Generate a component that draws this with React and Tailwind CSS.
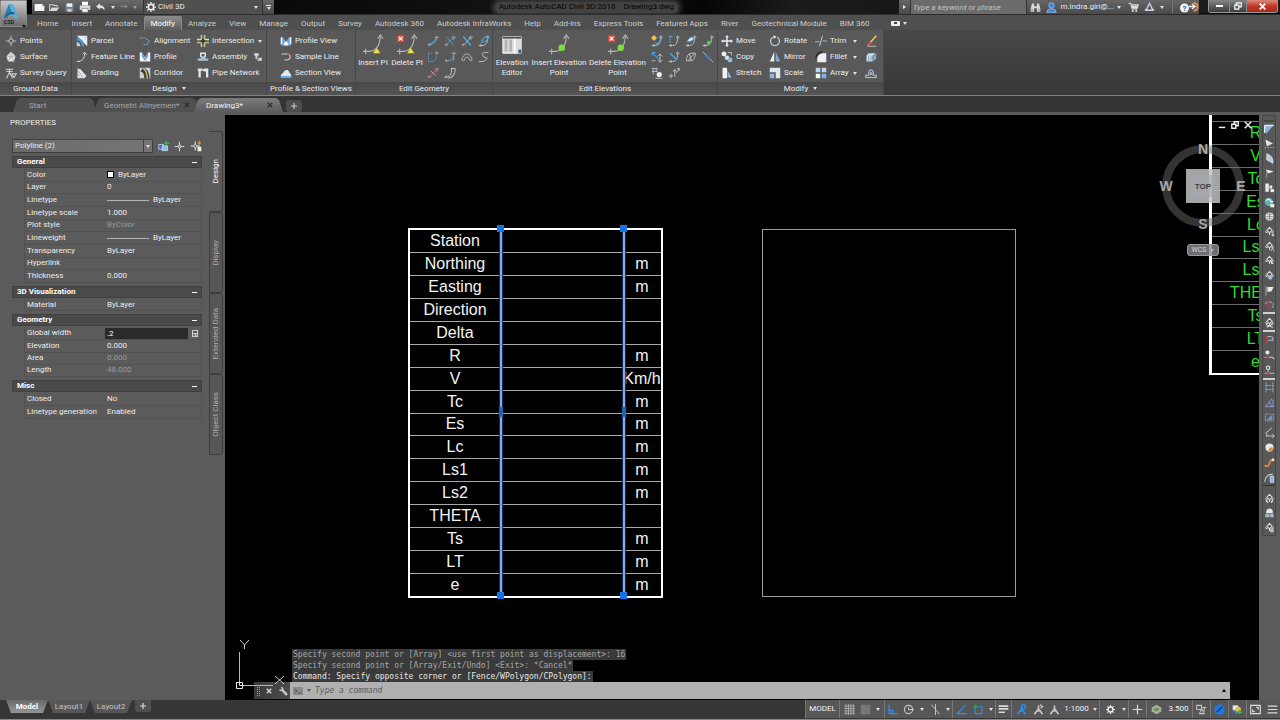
import React from 'react';

const G = '#d6d6d6';
const B = '#8fc1ee';

const ICONS = {
    points: <><circle cx="8" cy="8" r="3" fill="none" stroke={G} /><path d="M8 1v5M8 10v5M1 8h5M10 8h5" stroke={G} /></>,
    surface: <><path d="M8 1l6 6-2 7H4L2 7z" fill="#e8e8e8" /><path d="M8 1v6l6 0M8 7l-4 7M8 7l4 7M2 7h6" stroke="#9a9a9a" fill="none" /></>,
    query: <><path d="M1 3h10M2 6h8M6 3v4l-4 8M6 7l4 8M9 9h6l-3 5z" stroke={G} fill="none" strokeWidth="1.4" /></>,
    parcel: <><path d="M1 1h14v14z" fill="#e6eef6" /><path d="M1 4q9 0 10 11H8Q7 7 1 7z" fill="#4b9be0" /><path d="M1 9q4 1 5 6H1zM11 2l3 0v5z" fill="#cfcfcf" /></>,
    featureLine: <><path d="M2 14q9 0 10-11M1 14h4M9 4l3-2 2 3" stroke={G} fill="none" strokeWidth="1.3" /></>,
    grading: <><path d="M2 2l4 1 8 9-3 3H2z" fill="#e4e4e4" /><path d="M3 5l6 9M2 9l4 5" stroke="#86a6c6" /></>,
    alignment: <><path d="M1 4h7M9 5q5 1 4 5-1 3-7 3" stroke="#7fa4cc" fill="none" strokeWidth="1.5" strokeDasharray="3 1.4" /></>,
    profile: <><path d="M1 2h3l4 7 4-7h3v12H1z" fill="#f1f1f1" /><path d="M4 2l4 9 4-9v5l-4 6-4-6z" fill="#4a8fd8" /></>,
    corridor: <><path d="M1 1h14v14H1z" fill="#cfcfcf" /><path d="M2 6q5 1 5 9h7Q14 3 5 1z" fill="#3f3f3f" /><path d="M5 2q6 3 6 13" stroke="#e8d860" fill="none" strokeWidth="1.6" /></>,
    intersection: <><path d="M5 0h6v16H5zM0 5h16v6H0z" fill="#d8d8b8" /><path d="M6.500 0h3v16h-3zM0 6.500h16v3H0z" fill="#3a3a30" /><path d="M8 0v5M8 11v5M0 8h5M11 8h5" stroke="#e6dc7a" /></>,
    assembly: <><path d="M4 2h8v6H4z" fill="#e6e6e6" /><path d="M1 10h4V7h6v3h4v3H1z" fill="#a9c2dc" /><path d="M6 4h4v3H6z" fill="#555" /></>,
    assemblySmall: <><path d="M2 2h7v4H7v3h7v5H7v-3H4V6H2z" fill="#d3dce6" /><path d="M6 9h3v3H6z" fill="#777" /></>,
    pipe: <><path d="M1 2h6v3H5v9H2V5H1zM9 2h6v12h-3V6H9z" fill="#e6e6e6" /><path d="M6 4h4" stroke={G} strokeWidth="2" /></>,
    sample: <><path d="M2 4h8M11 4q4 2 2 6-1 2-7 2" stroke={G} fill="none" strokeWidth="1.4" /><path d="M9 2l4 3" stroke="#e0503c" strokeWidth="1.6" /></>,
    section: <><path d="M1 12q0-3 3-4 2-5 6-4 2 1 3 4 2 1 2 4v2H1z" fill="#dfeaf4" /><path d="M1 12h14v2H1z" fill="#6aa6e2" /></>,
    profileView: <><path d="M1 3h3l4 6 4-6h3v11H1z" fill="#6aa6e2" /><path d="M1 3h2v9H1zM13 3h2v9h-2zM5 11l3-3 3 3v3H5z" fill="#eef4fa" /></>,
    move: <><path d="M8 0l2.500 3H9v4h4V5.500L16 8l-3 2.500V9H9v4h1.500L8 16l-2.500-3H7V9H3v1.500L0 8l3-2.500V7h4V3H5.500z" fill="#e2ecf6" /></>,
    copy: <><circle cx="4" cy="4" r="3.300" fill="#eee" /><circle cx="8" cy="9" r="3" fill="#cfe0f2" /><circle cx="12" cy="12" r="3.300" fill="#8db6e4" /><path d="M9 2h5v4" stroke={G} fill="none" /></>,
    stretch: <><path d="M2 1h6v14H2z" fill="#f2f2f2" /><path d="M8 3l6 11H8z" fill="#8fc1ee" /><path d="M9 4v11" stroke="#3c5d80" /></>,
    rotate: <><path d="M5 3a6 6 0 1 0 6 0" stroke="#b7cce4" fill="none" strokeWidth="1.7" /><path d="M6 0v5l4-2.500z" fill="#f0f0f0" /></>,
    mirror: <><path d="M7 1v13H1z" fill="#eee" /><path d="M9 1v13h6z" fill="#7fa9d8" /></>,
    scale: <><path d="M1 1h14v14H9V7H1z" fill="#dfe8f2" /><path d="M1 9h6v6H1z" fill="#8fb6e2" /></>,
    trim: <><path d="M0 9h6M10 8h6" stroke={B} strokeWidth="1.3" /><path d="M10 1L6 15" stroke="#cfd6dc" strokeWidth="1.2" /></>,
    fillet: <><path d="M3 15V9q1-5 7-6h5v12z" fill="#f0f0f0" /><path d="M1 10q1-8 9-9" stroke="#2a2a2a" fill="none" strokeWidth="2" /></>,
    array: <><path d="M1 1h6v6H1zM9 1h6v6H9z" fill="#bcd6f2" /><path d="M1 9h6v6H1z" fill="#f2f2f2" /><path d="M9 9h6v6H9z" fill="#7fb0e6" /></>,
    erase: <><path d="M15 1L7 10" stroke="#f0c45a" strokeWidth="2.200" /><path d="M7 9l2 2-4 3-3-1z" fill="#e0563c" /><path d="M3 15h12" stroke={G} /></>,
    explode: <><path d="M2 6l3-3h9l-3 3zM2 6h8v8H2z" fill="#cfe0f2" /><path d="M11 7l4-4v7l-4 4z" fill="#7fa9d8" /><path d="M5 6v8M8 6v8" stroke="#6b8db0" /></>,
    offset: <><path d="M1 14h14v-3h-4V8q0-4-3-4T5 8v3H1z" fill="none" stroke="#a9c8ec" strokeWidth="1.400" /><path d="M7 11V8q1-2 2 0v3" stroke="#e6e6e6" fill="none" /></>,
    newFile: <><path d="M1 3h11l3 3v7H1z" fill="#f5f5f5" /><path d="M12 3v3h3" fill="#999" /></>,
    open: <><path d="M1 13V4h5l1 1h5v2" stroke="#d8d8d8" fill="none" strokeWidth="1.500" /><path d="M4 8h11l-4 5H1z" fill="#d8d8d8" /></>,
    save: <><path d="M2 2h12v12H2z" fill="#6f8093" /><path d="M4 2h8v5H4z" fill="#f2f2f2" /><path d="M5 10h6v4H5z" fill="#d0d0d0" /></>,
    print: <><path d="M4 1h8v5H4z" fill="#fff" /><path d="M1 6h14v6H1z" fill="#d8d8d8" /><path d="M4 10h8v5H4z" fill="#f5f5f5" stroke="#777" strokeWidth=".8" /></>,
    undo: <><path d="M1 7l6-5v3q7 0 8 8-3-4-8-4v3z" fill="#e4e4e4" /></>,
    redo: <><path d="M15 7L9 3v3H1v2h8v3z" fill="#7d7d7d" /></>,
    gear: <><circle cx="8" cy="8" r="4.300" fill="none" stroke="#eee" strokeWidth="2.600" /><path d="M8 0v3M8 13v3M0 8h3M13 8h3M2.300 2.300l2 2M11.700 11.700l2 2M2.300 13.700l2-2M11.700 4.300l2-2" stroke="#eee" strokeWidth="2" /></>,
    binoculars: <><path d="M3 2h3v4h4V2h3l2 7v5h-5V9H6v5H1V9z" fill="#d8d8d8" /><path d="M3 10v3M13 10v3" stroke="#555" /></>,
    user: <><circle cx="8" cy="5" r="4" fill="#3c82e0" stroke="#a8cbf4" /><path d="M1 15q1-5 5-5h4q4 0 5 5z" fill="#3c82e0" stroke="#a8cbf4" /></>,
    cart: <><path d="M1 2h3l2 8h7l2-6H5" stroke="#e0e0e0" fill="none" strokeWidth="1.500" /><path d="M5 5h9l-1 4H6z" fill="#e0e0e0" /><circle cx="7" cy="13" r="1.500" fill="#e0e0e0" /><circle cx="12" cy="13" r="1.500" fill="#e0e0e0" /></>,
    exchange: <><path d="M8 2l5 10H3z" fill="none" stroke="#c4d6ea" strokeWidth="2" /><path d="M1 12l4-2M15 12l-4-2" stroke="#c4d6ea" strokeWidth="2" /></>,
    selectPick: <><path d="M1 5h7v7H1z" fill="#3b70b0" stroke="#e0e8f0" /><path d="M6 7h8v7H6z" fill="#8fb9e8" stroke="#e0e8f0" /><path d="M12 0v7M9 3.500h7" stroke="#35c04a" strokeWidth="2" /></>,
    target: <><circle cx="8" cy="8" r="2" fill="none" stroke="#f0f0f0" strokeWidth="1.400" /><path d="M8 1v5M8 10v5M1 8h5M10 8h5" stroke="#f0f0f0" strokeWidth="1.200" /></>,
    quick: <><path d="M7 2v4M7 10v4M1 8h4M9 8h4" stroke="#f0f0f0" strokeWidth="1.300" /><circle cx="7" cy="8" r="2" fill="none" stroke="#f0f0f0" /><path d="M13 0l-3 5h2l-1 4 4-6h-2z" fill="#f0a020" /><path d="M10 9h5v6h-5z" fill="#f2f2f2" /></>,
};

function Icon({ name, className = 'w-3 h-3' }) {
    return (
        <svg viewBox="0 0 16 16" className={`shrink-0 ${className}`} aria-hidden="true">
            {ICONS[name]}
        </svg>
    );
}

function Caret({ className = 'border-t-[#e0e0e0]' }) {
    return <span className={`inline-block shrink-0 border-x-2 border-t-[3px] border-x-transparent ${className}`} />;
}

const MENU_TABS = [
    'Home', 'Insert', 'Annotate', 'Modify', 'Analyze', 'View', 'Manage', 'Output', 'Survey', 'Autodesk 360',
    'Autodesk InfraWorks', 'Help', 'Add-ins', 'Express Tools', 'Featured Apps', 'River', 'Geotechnical Module', 'BIM 360',
];

function TitleBar() {
    return (
        <header className="flex h-[14px] shrink-0 items-stretch bg-[linear-gradient(90deg,#000,#141414_45%,#050505_55%,#1c1c1c_62%,#050505)] text-[8px]">
            <div className="ml-8 flex w-[242px] shrink-0 items-center bg-gradient-to-b from-[#6a6a6a] to-[#484848]">
                <div className="flex w-[111px] items-center gap-1 pl-[2px]">
                    <button aria-label="New"><Icon name="newFile" className="h-[11px] w-[11px]" /></button>
                    <button aria-label="Open"><Icon name="open" className="h-[11px] w-[11px]" /></button>
                    <button aria-label="Save"><Icon name="save" className="h-[11px] w-[11px]" /></button>
                    <button aria-label="Plot"><Icon name="print" className="h-[12px] w-[12px]" /></button>
                    <button aria-label="Undo" className="flex items-center gap-[5px]"><Icon name="undo" className="h-[10px] w-[11px]" /><Caret /></button>
                    <button aria-label="Redo" className="flex items-center gap-1"><Icon name="redo" className="h-[10px] w-[10px]" /><Caret className="border-t-[#a0a0a0]" /></button>
                </div>
                <label className="flex flex-1 items-center gap-[2px] border-l border-[#333] bg-[#505050] pl-[2px] pr-1">
                    <Icon name="gear" className="h-[10px] w-[10px]" />
                    <select aria-label="Workspace" className="flex-1 appearance-none bg-transparent leading-[14px] text-[#ececec]">
                        <option>Civil 3D</option>
                    </select>
                    <Caret />
                </label>
                <button aria-label="Customize" className="flex h-full w-3 flex-col items-center justify-center gap-px border-l border-[#333]">
                    <span className="h-px w-[5px] bg-[#e8e8e8]" />
                    <Caret />
                </button>
            </div>
            <h1 className="flex flex-1 items-center justify-center overflow-hidden whitespace-nowrap">
                <span className="flex h-[11px] items-center gap-2 rounded-full bg-[#424242] px-1 text-[#050505] shadow-[0_0_5px_3px_#3c3c3c]">
                    <span>Autodesk AutoCAD Civil 3D 2018</span>
                    <span>Drawing3.dwg</span>
                </span>
            </h1>
            <div className="flex w-[300px] shrink-0 items-center bg-gradient-to-b from-[#666] to-[#4a4a4a] text-[#eaeaea]">
                <span className="ml-1 mr-1 border-y-2 border-l-[3px] border-y-transparent border-l-[#eee]" />
                <input aria-label="Search" placeholder="Type a keyword or phrase" className="h-full w-[119px] border-x border-[#333] bg-[#6b6b6b] px-[2px] italic placeholder:text-[#c2c2c2]" />
                <button aria-label="Find" className="ml-[3px]"><Icon name="binoculars" className="h-[11px] w-[11px]" /></button>
                <button className="ml-[5px] flex items-center gap-[3px] whitespace-nowrap"><Icon name="user" className="h-[11px] w-[11px]" /><span>m.indra.giri@...</span><Caret /></button>
                <button aria-label="Store" className="ml-[7px]"><Icon name="cart" className="h-[11px] w-[11px]" /></button>
                <button aria-label="Apps" className="ml-[5px] flex items-center gap-[5px]"><Icon name="exchange" className="h-[11px] w-[11px]" /><Caret /></button>
                <button aria-label="Help" className="ml-2 flex items-center border-l border-[#777] pl-[6px]">
                    <svg viewBox="0 0 40 22" className="h-[11px] w-5">
                        <circle cx="11" cy="12" r="9" fill="#f3f3f3" />
                        <text x="7" y="18" fontSize="16" fontWeight="bold" fill="#2a62c0">?</text>
                        <path d="M20 9h10M26 4l6 5-6 5" stroke="#eee" strokeWidth="3" fill="none" />
                        <path d="M29 2q8 0 8 8t-8 7" stroke="#e08a50" strokeWidth="4" fill="none" />
                    </svg>
                </button>
            </div>
            <div className="flex h-[13px] w-[81px] shrink-0 justify-end bg-[#1c1c1c] pr-[2px]">
                <div className="flex overflow-hidden rounded-b-[3px] border border-t-0 border-[#999]">
                    <button aria-label="Minimize" className="flex w-5 items-center justify-center bg-gradient-to-b from-[#858585] to-[#3c3c3c]"><span className="h-[2px] w-[7px] bg-white" /></button>
                    <button aria-label="Restore" className="flex w-[18px] items-center justify-center border-x border-[#888] bg-gradient-to-b from-[#858585] to-[#3c3c3c]">
                        <svg viewBox="0 0 10 10" className="h-2 w-2"><path d="M1 4h5v5H1zM3 4V1h6v5H6" fill="none" stroke="#fff" strokeWidth="1.500" /></svg>
                    </button>
                    <button aria-label="Close" className="flex w-[30px] items-center justify-center bg-gradient-to-b from-[#d8897c] via-[#c0392b] to-[#a82a1a]">
                        <svg viewBox="0 0 10 10" className="h-[7px] w-[7px]"><path d="M1 1l8 8M9 1L1 9" stroke="#fff" strokeWidth="2.600" /></svg>
                    </button>
                </div>
            </div>
        </header>
    );
}

function MenuTabs() {
    return (
        <nav className="flex h-4 shrink-0 items-end border-t border-[#2c2c2c] bg-[#4f4f4f] pl-[31px] text-[8px] leading-[13px]">
            {MENU_TABS.map((tab) => (
                <button
                    key={tab}
                    className={tab === 'Modify'
                        ? 'h-[14px] whitespace-nowrap rounded-t-[2px] border border-b-0 border-[#8a8a8a] bg-gradient-to-b from-[#8a8a8a] to-[#5c5c5c] pl-[5px] pr-[6px] text-white'
                        : 'h-[14px] whitespace-nowrap pl-[6px] pr-[7px] text-[#cdcdcd]'}
                >
                    {tab}
                </button>
            ))}
            <button aria-label="Ribbon options" className="ml-[15px] flex h-[14px] items-center gap-[3px]">
                <span className="flex h-[5px] w-[9px] items-center justify-center rounded-[1px] bg-[#eee]"><span className="h-[2px] w-[3px] bg-[#444]" /></span>
                <Caret />
            </button>
        </nav>
    );
}

function Panel({ title, caret, className, children }) {
    return (
        <section className={`flex shrink-0 flex-col border-r border-[#464646] ${className}`}>
            <div className="flex flex-1 pt-[3px]">{children}</div>
            <h2 className="flex h-[13px] items-center justify-center gap-[5px] whitespace-nowrap bg-gradient-to-b from-[#494949] to-[#545454] text-[8px] leading-[13px]">
                {title}
                {caret && <Caret />}
            </h2>
        </section>
    );
}

function ToolColumn({ tools, className = '' }) {
    return (
        <div className={`flex shrink-0 flex-col ${className}`}>
            {tools.map(([icon, label, extra]) => (
                <div key={icon} className="flex h-4 items-center">
                    <button aria-label={label || icon} className="flex items-center gap-[3px] whitespace-nowrap">
                        <Icon name={icon} />
                        {label && <span>{label}</span>}
                    </button>
                    {extra}
                </div>
            ))}
        </div>
    );
}

const curve = <path d="M1 14h5q7 0 7-11M11 4l2-3 2 3M4 12v4" stroke="#c4c4c4" fill="none" strokeWidth="1.200" />;
const diag = <path d="M1 13h5M3 11v4M13 1v6M10 3h6" stroke="#b4b4b4" fill="none" />;

const GEOMETRY_TOOLS = [
    <>{diag}<path d="M4 12q6-1 8-7" stroke="#48a8e8" strokeWidth="2" fill="none" /></>,
    <>{diag}<path d="M3 2l10 12M4 12l9-9" stroke="#5a9ad6" strokeWidth="1.200" /></>,
    <>{diag}<path d="M3 2l10 12" stroke="#48a8e8" strokeWidth="2" /><path d="M5 12l8-9" stroke="#c4c4c4" /></>,
    <>{curve}<path d="M5 10q1-8 9-8-1 7-9 8z" fill="none" stroke="#48a8e8" strokeWidth="1.600" /></>,
    <><path d="M2 3v11h5q6-1 6-11M2 3h6" stroke="#6aa0d0" fill="none" strokeDasharray="2 1" /><path d="M11 4l2-3 2 3" stroke={G} fill="none" /></>,
    <>{diag}<path d="M5 13q7 0 8-8M13 7v7" stroke="#86aed4" fill="none" strokeDasharray="2 1" strokeWidth="1.500" /></>,
    <path d="M1 12Q3 4 8 4t7 8M4 13q1-5 4-5t4 5M1 12l3 1M12 13l3-1" stroke="#c4c4c4" fill="none" />,
    <path d="M14 2Q5 1 6 5t5 4-4 5H1" stroke="#c4c4c4" fill="none" strokeWidth="1.200" />,
    <>{diag}<path d="M3 13L13 3" stroke="#e04848" strokeWidth="2" strokeDasharray="3 1" /><path d="M5 5l7 7" stroke="#c4c4c4" /></>,
    <path d="M1 14q10 0 9-12M5 15q10-1 10-13H9M1 14l3-3M10 14l3-4" stroke="#c4c4c4" fill="none" strokeWidth="1.300" />,
];

const ELEVATION_TOOLS = [
    <>{curve}<path d="M6 12q7-1 8-8" stroke="#48a8e8" strokeWidth="2" fill="none" /><circle cx="4" cy="4" r="3" fill="#f0a83a" /><path d="M4 0v8M0 4h8" stroke="#f8d070" /></>,
    <>{curve}<path d="M3 2v9M1 2h5" stroke="#48a8e8" strokeWidth="1.800" strokeDasharray="2 1" /></>,
    <>{curve}<path d="M3 9q2-7 9-6-1 6-9 6z" fill="#d6edfa" stroke="#48a8e8" strokeWidth="1.300" /></>,
    <>{curve}<circle cx="9" cy="10" r="2.500" fill="#4ed44e" /></>,
    <><path d="M2 2l8 9M2 6V2h4" stroke="#48a8e8" fill="none" strokeWidth="1.500" /><path d="M1 13h5M12 4v11M9 7l3-3 3 3M9 12l3 3 3-3" stroke={G} fill="none" /></>,
    <>{curve}<path d="M3 3l9 9" stroke="#48a8e8" strokeWidth="2" /></>,
    <path d="M2 13q0-9 6-10h6q-1 10-6 10zM5 12l7-8M6 4l2 8" stroke="#c4c4c4" fill="none" strokeWidth="1.200" />,
    <><path d="M1 1l14 14" stroke={G} /><path d="M5 5l6 7" stroke="#3a8ad8" strokeWidth="2.500" /></>,
    <><path d="M1 2h8M1 6h8M3 1v9M7 1v6" stroke="#9db6d2" strokeWidth="1.400" /><circle cx="11" cy="10" r="3.500" fill="#ececec" /><path d="M6 15h9" stroke={G} /></>,
    <path d="M1 12h6M4 9v6M9 13V4M7 6l2-3 2 3M11 8l4-6M12 2h3v3" stroke="#c4c4c4" fill="none" strokeWidth="1.200" />,
];

function ToolGrid({ tools, label }) {
    return (
        <div className="grid shrink-0 grid-cols-[repeat(4,17px)] content-start">
            {tools.map((drawing, i) => (
                <button key={i} aria-label={`${label} ${i + 1}`} className="flex h-4 items-center justify-center">
                    <svg viewBox="0 0 16 16" className="h-3 w-3">{drawing}</svg>
                </button>
            ))}
        </div>
    );
}

function BigTool({ lines, className, children }) {
    return (
        <button className={`flex shrink-0 flex-col items-center ${className}`}>
            <svg viewBox="0 0 24 24" className="mt-px h-[22px] w-[22px] shrink-0">{children}</svg>
            <span className="mt-[2px] flex flex-col items-center whitespace-nowrap leading-[10px]">
                {lines.map((line) => <span key={line}>{line}</span>)}
            </span>
        </button>
    );
}

const bigCurve = <path d="M1 19h7Q19 18 20 3M4 16v6M17 5l3-4 3 4" stroke="#b8b8b8" fill="none" strokeWidth="1.200" />;
const redCross = <><path d="M1 1h8v8H1z" fill="#e04030" /><path d="M3 3l4 4M7 3L3 7" stroke="#fff" strokeWidth="1.500" /></>;

function Ribbon() {
    return (
        <div className="flex h-[66px] shrink-0 border-b border-[#808080] bg-gradient-to-b from-[#484848] to-[#383838] text-[8px] leading-[10px] text-[#ececec]">
            <div className="flex shrink-0 bg-[#595959]">
                <Panel title="Ground Data" className="w-[72px]">
                    <ToolColumn className="pl-[5px]" tools={[['points', 'Points'], ['surface', 'Surface'], ['query', 'Survey Query']]} />
                </Panel>
                <Panel title="Design" caret className="w-[195px]">
                    <ToolColumn className="w-[67px] pl-1" tools={[['parcel', 'Parcel'], ['featureLine', 'Feature Line'], ['grading', 'Grading']]} />
                    <ToolColumn className="w-[58px]" tools={[['alignment', 'Alignment'], ['profile', 'Profile'], ['corridor', 'Corridor']]} />
                    <ToolColumn
                        tools={[
                            ['intersection', 'Intersection', <span key="c" className="ml-1 flex"><Caret /></span>],
                            ['assembly', 'Assembly', <button key="b" aria-label="Subassembly" className="ml-[6px]"><Icon name="assemblySmall" className="h-[10px] w-[10px]" /></button>],
                            ['pipe', 'Pipe Network'],
                        ]}
                    />
                </Panel>
                <Panel title="Profile & Section Views" className="w-[89px]">
                    <ToolColumn className="pl-[13px]" tools={[['profileView', 'Profile View'], ['sample', 'Sample Line'], ['section', 'Section View']]} />
                </Panel>
                <Panel title="Edit Geometry" className="w-[137px]">
                    <BigTool lines={['Insert PI']} className="w-[34px]">
                        {bigCurve}
                        <path d="M16 15l4 6h-8z" fill="#f4dc3c" />
                    </BigTool>
                    <BigTool lines={['Delete PI']} className="w-[34px]">
                        {bigCurve}
                        {redCross}
                        <path d="M16 15l4 6h-8z" fill="#f4dc3c" />
                    </BigTool>
                    <ToolGrid tools={GEOMETRY_TOOLS} label="Geometry tool" />
                </Panel>
                <Panel title="Edit Elevations" className="w-[225px]">
                    <BigTool lines={['Elevation', 'Editor']} className="w-[38px]">
                        <path d="M2 3h20v18H2z" fill="#dcdcdc" stroke="#f4f4f4" />
                        <path d="M4 6h3v13H4zM9 6h3v13H9z" fill="#b4b4b4" />
                        <path d="M14 3h2v18h-2z" fill="#fff" />
                        <path d="M2 3h20v2H2z" fill="#4e4e4e" />
                        <path d="M19 17h3v4h-3z" fill="#3d5a80" />
                    </BigTool>
                    <BigTool lines={['Insert Elevation', 'Point']} className="w-[56px]">
                        {bigCurve}
                        <circle cx="15" cy="15" r="3.500" fill="#7ae03c" />
                    </BigTool>
                    <BigTool lines={['Delete Elevation', 'Point']} className="w-[61px]">
                        {bigCurve}
                        {redCross}
                        <circle cx="15" cy="15" r="3.500" fill="#7ae03c" />
                    </BigTool>
                    <ToolGrid tools={ELEVATION_TOOLS} label="Elevation tool" />
                </Panel>
                <Panel title="Modify" caret className="w-[166px]">
                    <ToolColumn className="w-[51px] pl-[3px]" tools={[['move', 'Move'], ['copy', 'Copy'], ['stretch', 'Stretch']]} />
                    <ToolColumn className="w-[46px]" tools={[['rotate', 'Rotate'], ['mirror', 'Mirror'], ['scale', 'Scale']]} />
                    <ToolColumn className="w-[38px]" tools={[['trim', 'Trim'], ['fillet', 'Fillet'], ['array', 'Array']]} />
                    <div className="flex w-[12px] flex-col">
                        {['Trim', 'Fillet', 'Array'].map((name) => (
                            <button key={name} aria-label={`${name} options`} className="flex h-4 items-center"><Caret /></button>
                        ))}
                    </div>
                    <ToolColumn tools={[['erase'], ['explode'], ['offset']]} />
                </Panel>
            </div>
        </div>
    );
}

const FILE_TABS = [
    { name: 'Start', style: 'w-[84px] pl-[16px] text-[#a8a8a8] bg-[#505050]' },
    { name: 'Geometri Alinyemen*', close: true, style: 'w-[106px] pl-[10px] text-[#a8a8a8] bg-[#505050] -ml-[3px]' },
    { name: 'Drawing3*', close: true, style: 'w-[89px] pl-[12px] text-[#f2f2f2] bg-gradient-to-b from-[#7c7c7c] to-[#5c5c5c] -ml-[6px]' },
];

function FileTabs() {
    return (
        <div className="flex h-[19px] shrink-0 items-end border-b-[3px] border-[#5b5b5b] bg-[#343434] pl-[13px] text-[8px] leading-[13px]">
            {FILE_TABS.map((tab) => (
                <div key={tab.name} className={`flex h-[14px] shrink-0 items-center justify-between pr-[10px] [clip-path:polygon(0_100%,4px_2px,7px_0,calc(100%-7px)_0,calc(100%-4px)_2px,100%_100%)] ${tab.style}`}>
                    <button className="whitespace-nowrap">{tab.name}</button>
                    {tab.close && (
                        <button aria-label={`Close ${tab.name}`}>
                            <svg viewBox="0 0 8 8" className="h-[6px] w-[6px]"><path d="M1 1l6 6M7 1L1 7" stroke="#2e2e2e" strokeWidth="1.600" /></svg>
                        </button>
                    )}
                </div>
            ))}
            <button aria-label="New tab" className="ml-[3px] flex h-[12px] w-4 items-center justify-center rounded-[3px] bg-[#4e4e4e]">
                <svg viewBox="0 0 8 8" className="h-[6px] w-[6px]"><path d="M4 0v8M0 4h8" stroke="#c8c8c8" strokeWidth="1.600" /></svg>
            </button>
        </div>
    );
}

const PROPERTIES = [
    {
        title: 'General',
        height: 'h-[114px]',
        rows: [
            { name: 'Color', value: 'ByLayer', swatch: true },
            { name: 'Layer', value: '0' },
            { name: 'Linetype', value: 'ByLayer', line: true },
            { name: 'Linetype scale', value: '1.000' },
            { name: 'Plot style', value: 'ByColor', dim: true },
            { name: 'Lineweight', value: 'ByLayer', line: true },
            { name: 'Transparency', value: 'ByLayer' },
            { name: 'Hyperlink', value: '' },
            { name: 'Thickness', value: '0.000' },
        ],
    },
    { title: '3D Visualization', height: 'h-[12px]', rows: [{ name: 'Material', value: 'ByLayer' }] },
    {
        title: 'Geometry',
        height: 'h-[50px]',
        rows: [
            { name: 'Global width', value: '.2', input: true },
            { name: 'Elevation', value: '0.000' },
            { name: 'Area', value: '0.000', dim: true },
            { name: 'Length', value: '48.000', dim: true },
        ],
    },
    {
        title: 'Misc',
        height: 'h-[26px]',
        rows: [
            { name: 'Closed', value: 'No' },
            { name: 'Linetype generation', value: 'Enabled' },
        ],
    },
];

function PropertyValue({ row }) {
    if (row.input) {
        return (
            <span className="flex items-center">
                <input id="global-width" defaultValue={row.value} className="h-[11px] w-[83px] bg-[#2a2a2a] pl-[2px] text-white" />
                <button aria-label="Calculator" className="ml-1 grid h-[7px] w-[6px] grid-cols-2 gap-px bg-[#ccc] p-px">
                    <span className="col-span-2 bg-[#555]" /><span className="bg-[#777]" /><span className="bg-[#777]" />
                </button>
            </span>
        );
    }
    return (
        <span className={`flex items-center gap-1 pl-[2px] ${row.dim ? 'text-[#9a9a9a]' : 'text-[#ececec]'}`}>
            {row.swatch && <span className="h-[7px] w-[7px] border border-black bg-white" />}
            {row.line && <span className="h-px w-[42px] bg-[#b4b4b4]" />}
            {row.value}
        </span>
    );
}

function PropertiesPanel() {
    return (
        <aside className="flex w-[225px] shrink-0 bg-[#5b5b5b] text-[8px] leading-[10px] text-[#ececec]">
            <div className="flex min-w-0 flex-1 flex-col pl-3 pr-[7px]">
                <h2 className="-ml-[2px] mt-[3px]">PROPERTIES</h2>
                <div className="mt-[11px] flex items-center">
                    <label className="flex h-[14px] w-[141px] items-center border border-[#404040] bg-gradient-to-r from-[#6c6c6c] to-[#757575]">
                        <select aria-label="Selected object" className="flex-1 appearance-none bg-transparent pl-[2px]">
                            <option>Polyline (2)</option>
                        </select>
                        <span className="flex h-full w-[9px] items-center justify-center border-l border-[#404040]"><Caret /></span>
                    </label>
                    <button aria-label="Toggle pick add" className="ml-[5px]"><Icon name="selectPick" className="h-[11px] w-[11px]" /></button>
                    <button aria-label="Select objects" className="ml-[5px]"><Icon name="target" className="h-[11px] w-[11px]" /></button>
                    <button aria-label="Quick select" className="ml-[5px]"><Icon name="quick" className="h-[12px] w-[12px]" /></button>
                </div>
                {PROPERTIES.map((group) => (
                    <section key={group.title} className="mt-[3px]">
                        <h3 className="mb-px flex h-[12px] items-center justify-between border border-[#404040] bg-[#4a4a4a] px-1 font-bold text-white">
                            {group.title}
                            <button aria-label={`Collapse ${group.title}`} className="h-px w-[5px] bg-white" />
                        </h3>
                        <table className={`w-full table-fixed border-separate border-spacing-0 ${group.height}`}>
                            <tbody>
                                {group.rows.map((row) => (
                                    <tr key={row.name}>
                                        <td className="w-3 p-0" />
                                        <th className="w-[81px] whitespace-nowrap border-b border-l border-[#525252] p-0 pl-[2px] text-left font-normal">
                                            {row.input ? <label htmlFor="global-width">{row.name}</label> : row.name}
                                        </th>
                                        <td className="border-b border-r border-[#525252] p-0"><PropertyValue row={row} /></td>
                                    </tr>
                                ))}
                            </tbody>
                        </table>
                    </section>
                ))}
            </div>
            <div className="flex w-4 shrink-0 flex-col pr-[2px] pt-4">
                {['Design', 'Display', 'Extended Data', 'Object Class'].map((tab) => (
                    <button
                        key={tab}
                        className={`flex h-[81px] w-[14px] items-center justify-center rounded-r-[3px] border [writing-mode:vertical-rl] ${tab === 'Design' ? 'border-[#3e3e3e] border-l-transparent text-white' : 'border-[#3e3e3e] bg-[#565656] text-[#adadad]'}`}
                    >
                        <span className="rotate-180 whitespace-nowrap">{tab}</span>
                    </button>
                ))}
            </div>
        </aside>
    );
}

const STATION_ROWS = [
    ['Station', ''], ['Northing', 'm'], ['Easting', 'm'], ['Direction', ''], ['Delta', ''], ['R', 'm'], ['V', 'Km/h'], ['Tc', 'm'],
    ['Es', 'm'], ['Lc', 'm'], ['Ls1', 'm'], ['Ls2', 'm'], ['THETA', ''], ['Ts', 'm'], ['LT', 'm'], ['e', 'm'],
];

// Station table with the two selected polylines and their grips
function StationTable() {
    return (
        <div className="absolute left-[183px] top-[113px] h-[370px] w-[255px]">
            <table className="h-[370px] w-full table-fixed border-separate border-spacing-0 border-2 border-white text-center font-['Liberation_Sans',sans-serif] text-[16px] leading-[18px] text-[#f4f4f4]">
                <tbody>
                    {STATION_ROWS.map(([name, unit], i) => {
                        const line = i < STATION_ROWS.length - 1 ? 'border-b border-[#a8a8a8]' : '';
                        return (
                            <tr key={name}>
                                <td className={`w-[90px] p-0 ${line}`}>{name}</td>
                                <td className={`p-0 ${line}`} />
                                <td className={`w-[38px] p-0 ${line}`}>{unit}</td>
                            </tr>
                        );
                    })}
                </tbody>
            </table>
            {['left-[92px]', 'left-[215px]'].map((left) => (
                <div key={left} className={`absolute inset-y-0 w-[2px] bg-[#8ea8dc] shadow-[0_0_1px_1px_#14306a] ${left}`}>
                    <span className="absolute -left-[3px] -top-[3px] h-[7px] w-[7px] bg-[#1473e6]" />
                    <span className="absolute -left-px top-[179px] h-[10px] w-1 bg-[#1f62b4]" />
                    <span className="absolute -bottom-[1px] -left-[3px] h-[7px] w-[7px] bg-[#1473e6]" />
                </div>
            ))}
        </div>
    );
}

const SIDE_ROWS = ['R', 'V', 'Tc', 'Es', 'Lc', 'Ls1', 'Ls2', 'THETA', 'Ts', 'LT', 'e'];

function SideTable() {
    return (
        <div className="absolute left-[984px] top-0 w-[260px] border-b-2 border-l-[3px] border-white pt-[6px]">
            <table className="h-[252px] w-full table-fixed border-separate border-spacing-0 text-center font-['Liberation_Sans',sans-serif] text-[16px] leading-[18px] text-[#2fdc2f]">
                <tbody>
                    {SIDE_ROWS.map((name) => (
                        <tr key={name}>
                            <td className="w-[87px] border-t border-[#6c6c6c] p-0">{name}</td>
                            <td className="border-t border-[#6c6c6c] p-0" />
                        </tr>
                    ))}
                </tbody>
            </table>
        </div>
    );
}

function ViewCube() {
    return (
        <div className="absolute right-[11px] top-[26px] flex w-[90px] flex-col items-center">
            <svg viewBox="0 0 90 90" className="h-[90px] w-[90px] font-bold">
                <circle cx="45" cy="45" r="37" fill="none" stroke="#6a6a6a" strokeOpacity=".48" strokeWidth="8" />
                <rect x="28" y="28" width="34" height="34" fill="#c4c4c4" fillOpacity=".84" />
                <rect x="34" y="34" width="22" height="22" fill="#a4a8b0" fillOpacity=".6" />
                <g fontFamily="Liberation Sans, sans-serif" textAnchor="middle">
                    <text x="45" y="48" fontSize="8" fill="#3c4148">TOP</text>
                    <g fontSize="14" fill="#a8a8a8">
                        <text x="45" y="13">N</text>
                        <text x="45" y="88">S</text>
                        <text x="8" y="50">W</text>
                        <text x="83" y="50">E</text>
                    </g>
                </g>
            </svg>
            <button className="mt-[13px] flex h-3 w-8 items-center justify-center gap-1 rounded-[3px] border border-[#999] bg-[#8a8a90]/80 text-[7px] leading-[10px] text-[#d8d8d8]">
                WCS <Caret className="border-t-[#bbb]" />
            </button>
        </div>
    );
}

function WindowControls() {
    return (
        <div className="absolute right-[7px] top-[6px] flex items-center gap-[5px]">
            {[
                ['Minimize drawing', 'M1 8h8'],
                ['Restore drawing', 'M1 4h5v5H1zM4 4V1h5v5H6'],
                ['Close drawing', 'M1 1l8 8M9 1L1 9'],
            ].map(([label, d]) => (
                <button key={label} aria-label={label}>
                    <svg viewBox="0 0 10 10" className="h-2 w-2"><path d={d} fill="none" stroke="#f0f0f0" strokeWidth="1.800" /></svg>
                </button>
            ))}
        </div>
    );
}

const HISTORY = [
    'Specify second point or [Array] <use first point as displacement>: 16',
    'Specify second point or [Array/Exit/Undo] <Exit>: *Cancel*',
    'Command: Specify opposite corner or [Fence/WPolygon/CPolygon]:',
];

function CommandLine() {
    return (
        <div className="absolute bottom-px left-[29px] right-[29px] font-['DejaVu_Sans_Mono','Liberation_Mono',monospace] text-[8px] leading-[10px]">
            <div className="flex flex-col items-start pl-[38px]">
                {HISTORY.map((line, i) => (
                    <p key={line} className={`whitespace-nowrap bg-[#3a3a3a] px-px pt-px ${i === 2 ? 'text-[#e8e8e8]' : 'text-[#a6a6a6]'}`}>{line}</p>
                ))}
            </div>
            <div className="flex h-[17px] items-stretch">
                <div className="flex w-9 shrink-0 items-center gap-[6px] bg-gradient-to-r from-[#3a3a3a] to-[#4c4c4c] pl-[3px]">
                    <span className="h-[11px] w-[3px] border-x border-dotted border-[#999]" />
                    <button aria-label="Close command line">
                        <svg viewBox="0 0 8 8" className="h-[6px] w-[6px]"><path d="M1 1l6 6M7 1L1 7" stroke="#ddd" strokeWidth="1.600" /></svg>
                    </button>
                    <button aria-label="Customize command line">
                        <svg viewBox="0 0 16 16" className="h-[10px] w-[10px]"><path d="M2 5l3 1 1-2-2-3q5 0 5 5l6 6q1 2-1 3-1 1-3-1L6 8Q2 9 2 5z" fill="#c8c8c8" /></svg>
                    </button>
                </div>
                <label className="flex flex-1 items-center bg-[#b0b0b0] pl-[3px] pr-1">
                    <svg viewBox="0 0 20 16" className="h-2 w-[10px]"><path d="M0 0h20v16H0z" fill="#8a8a8a" /><path d="M3 4l5 4-5 4M10 12h6" stroke="#4a4a4a" strokeWidth="2" fill="none" /></svg>
                    <span className="mx-1 flex"><Caret className="border-t-[#555]" /></span>
                    <input aria-label="Command" placeholder="Type a command" className="flex-1 bg-transparent italic placeholder:text-[#5e5e5e]" />
                    <span className="border-x-2 border-b-[3px] border-x-transparent border-b-black" />
                </label>
            </div>
        </div>
    );
}

function Canvas() {
    return (
        <main className="relative flex-1 overflow-hidden bg-black">
            <StationTable />
            <div className="absolute left-[537px] top-[114px] h-[368px] w-[254px] border border-[#9a9a9a]" />
            <SideTable />
            <ViewCube />
            <WindowControls />
            <CommandLine />
            {/* UCS icon */}
            <svg viewBox="0 0 60 60" className="pointer-events-none absolute bottom-[6px] left-[7px] h-[60px] w-[60px]">
                <path d="M7.500 18v30M11 51.500h30" stroke="#b8b8b8" fill="none" />
                <path d="M4.500 48.500h6v6h-6zM7.500 48v3.500h4" stroke="#e8e8e8" fill="none" />
                <path d="M8 6l4.500 5L17 6M12.500 11v4M43 42l9 8M52 42l-9 8" stroke="#d0d0d0" fill="none" />
            </svg>
        </main>
    );
}

const star = <path d="M8 2l4 4-4 4-4-4zM2 8l3 2M14 8l-3 2M8 10v3" stroke="#dcdcdc" fill="none" strokeWidth="1.500" />;
const SIDE_GROUPS = [
    {
        height: 'h-[190px]',
        icons: [
            <><path d="M1 2h13L3 14z" fill="#8fb4dc" /><path d="M1 2h13M1 2v11" stroke="#eee" strokeWidth="2" /></>,
            <><path d="M2 2l11 6-9 4z" fill="#e2e6ea" /><path d="M1 14h14" stroke={G} strokeDasharray="2 2" /></>,
            <path d="M4 1q10 3 9 14L4 10z" fill="#b9cbe2" stroke="#e8e8e8" />,
            <><path d="M3 2l11 3-8 3z" fill="#eee" /><path d="M4 2v13" stroke="#bbb" /></>,
            <><path d="M2 2h5v12H2zM8 5h4v5H8z" fill="#eaeaea" /><path d="M9 10h6v5H9z" fill="#fff" stroke="#555" /></>,
            <><circle cx="7" cy="7" r="6" fill="#5cb0c0" /><path d="M3 5q4-4 6 0t4 1" stroke="#e4f4e4" fill="none" strokeWidth="2" /><path d="M9 10h6v5H9z" fill="#e8e8e8" /></>,
            <><circle cx="8" cy="8" r="6" fill="#dfe3e0" /><path d="M2 8h12M8 2v12M4 4q4 3 8 0M4 12q4-3 8 0" stroke="#777" fill="none" /></>,
            <>{star}<circle cx="13" cy="13" r="2" fill="#b8c8d8" /></>,
            <>{star}<path d="M10 15l2.500-5 2.500 5" stroke="#eee" fill="none" /></>,
            <>{star}<path d="M8 6l6 7-3 0z" fill="#fff" /></>,
            <>{star}<circle cx="9" cy="11" r="3" fill="#9fc0e4" /></>,
            <><path d="M3 2v13" stroke={G} /><path d="M5 3h9l-3 6-6 1z" fill="#e6ecf2" /></>,
            <><path d="M2 7q4-5 9-2t0 8" stroke="#93aacb" fill="none" strokeWidth="1.500" strokeDasharray="3 1" /><path d="M7 2v13" stroke="#d23c3c" strokeWidth="1.500" /></>,
        ],
    },
    { height: 'h-[18px]', icons: [<>{star}<path d="M3 11l10 4M13 10L4 15" stroke="#dcdcdc" strokeWidth="1.500" /></>] },
    {
        height: 'h-[48px]',
        icons: [
            <><path d="M5 4q9-2 8 5H6" stroke="#a9bfdc" fill="none" strokeWidth="1.500" /><path d="M4 1v14M2 10h4" stroke="#d23c3c" strokeWidth="1.500" /></>,
            <><circle cx="5" cy="5" r="3" fill="#e6e6e6" /><path d="M1 12h7q5-1 7 3" stroke="#a9bfdc" fill="none" strokeWidth="1.500" /><circle cx="5" cy="12" r="2" fill="#d23c3c" /></>,
            <><circle cx="6" cy="4" r="2.500" fill="none" stroke="#eee" strokeWidth="1.500" /><path d="M1 12h14M6 7v6" stroke="#a9bfdc" strokeWidth="1.500" /><circle cx="6" cy="12" r="2" fill="#d23c3c" /></>,
        ],
    },
    {
        height: 'h-[107px]',
        icons: [
            <path d="M3 1v14M13 1v14M3 5h10M3 11h10" stroke="#8fb0dc" strokeWidth="1.400" strokeDasharray="3 1" fill="none" />,
            <path d="M2 14h13M2 14L12 2M11 14q0-4-4-6M13 4v10" stroke="#8f9fdc" strokeWidth="1.400" fill="none" />,
            <><path d="M2 3h12v10H2z" fill="none" stroke="#a9bfdc" strokeDasharray="2 1" /><path d="M3 12l9-8v8z" fill="#6f94cc" /></>,
            <path d="M2 9L12 1M3 13h12M4 9v5M12 10l3 3-3 3" stroke="#c4d0e0" strokeWidth="1.300" fill="none" />,
            <><circle cx="8" cy="8" r="6" fill="#e8e8e8" /><path d="M8 8h6a6 6 0 0 1-8 5z" fill="#e08a3c" /></>,
            <><path d="M1 12q5 4 7-3t7-4" stroke="#e08a3c" strokeWidth="2.600" fill="none" /><circle cx="13" cy="4" r="2" fill="#eee" /></>,
            <><path d="M1 14Q3 3 13 3" stroke={G} fill="none" strokeWidth="1.500" /><path d="M9 6h5v9H9z" fill="#8fb0ec" stroke="#dfe8f8" /></>,
        ],
    },
    {
        height: 'h-[50px]',
        icons: [
            <>{star}<path d="M3 11l3 3M13 11l-3 3" stroke="#eee" strokeWidth="2" /></>,
            <><path d="M3 9q0-7 5-7t5 7z" fill="#e8e8e8" /><path d="M2 10h6v5H2zM9 10h5v5H9z" fill="#a8b8c8" /></>,
            <>{star}<path d="M9 10h5v5H9z" fill="#b8c0c8" /></>,
        ],
    },
];

function SideToolbar() {
    return (
        <div className="w-[21px] shrink-0 bg-[#5b5b5b] pl-[3px] pr-1">
            <div className="flex flex-col items-center border border-[#454545] bg-[#585858]">
                <span className="mt-1 h-[2px] w-[10px] border-y border-[#444]" />
                {SIDE_GROUPS.map((group, g) => (
                    <div key={group.height} className={`flex w-full flex-col items-center justify-around ${group.height} ${g === 4 ? 'border-t border-[#333] pt-[5px]' : ''} ${g > 0 && g < 4 ? 'border-t-2 border-[#d0d0d0]' : ''}`}>
                        {group.icons.map((drawing, i) => (
                            <button key={i} aria-label={`Tool ${g + 1}.${i + 1}`}>
                                <svg viewBox="0 0 16 16" className="block h-[11px] w-[11px]">{drawing}</svg>
                            </button>
                        ))}
                    </div>
                ))}
            </div>
        </div>
    );
}

const person = (c) => <path d="M8 2v5M8 7L2 15M8 7l6 8M5 10h6" stroke={c} strokeWidth="2.500" fill="none" />;

const STATUS_ITEMS = [
    { label: 'Model space', text: 'MODEL', w: 'w-[34px]', sep: true },
    { label: 'Grid', w: 'w-[18px]', draw: <path d="M3 0v16M6.500 0v16M10 0v16M13.500 0v16M0 3h16M0 6.500h16M0 10h16M0 13.500h16" stroke="#bdbdbd" /> },
    { label: 'Snap', w: 'w-[14px]', draw: <path d="M1 1h14v14H1z" fill="#777" /> },
    { label: 'Snap options', w: 'w-[13px]', caret: true, sep: true },
    { label: 'Ortho', w: 'w-[15px]', draw: <path d="M3 1v13h13M3 9h5v5" stroke="#2f8cf0" strokeWidth="2" fill="none" /> },
    { label: 'Polar', w: 'w-[17px]', draw: <><circle cx="8" cy="8" r="6" fill="none" stroke="#c4c4c4" strokeWidth="1.800" /><path d="M8 8h8M8 8V5" stroke="#c4c4c4" strokeWidth="1.600" /></> },
    { label: 'Polar options', w: 'w-[9px]', caret: true },
    { label: 'Isodraft', w: 'w-[18px]', draw: <path d="M2 1l12 14M8 0v16" stroke="#c4c4c4" strokeWidth="1.400" /> },
    { label: 'Isodraft options', w: 'w-[9px]', caret: true, sep: true },
    { label: 'Object tracking', w: 'w-[17px]', draw: <path d="M14 2L2 14h14" stroke="#2f8cf0" strokeWidth="1.800" fill="none" /> },
    { label: 'Object snap', w: 'w-[17px]', draw: <><path d="M3 4h10v10H3z" stroke="#2f8cf0" strokeWidth="1.800" fill="none" /><path d="M1 1h5v5H1z" fill="#2f9a3c" /></> },
    { label: 'Snap settings', w: 'w-[9px]', caret: true, sep: true },
    { label: 'Lineweight', w: 'w-[16px]', draw: <path d="M1 3h14M1 7h14M1 12h9" stroke="#dcdcdc" strokeWidth="2.400" />, sep: true },
    { label: 'Annotation visibility', w: 'w-[18px]', draw: <>{person('#2f8cf0')}<circle cx="11" cy="4" r="3" fill="none" stroke="#2f8cf0" strokeWidth="2" /></> },
    { label: 'Auto scale', w: 'w-[16px]', draw: <>{person('#c4c4c4')}<path d="M10 1l4 3-3 2" stroke="#e0e0e0" strokeWidth="1.500" fill="none" /></> },
    { label: 'Annotation scale', w: 'w-[16px]', draw: person('#c4c4c4') },
    { label: 'Scale', text: '1:1000', w: 'w-[29px]' },
    { label: 'Scale list', w: 'w-[9px]', caret: true, sep: true },
    { label: 'Workspace switching', w: 'w-[20px]', icon: 'gear' },
    { label: 'Workspace list', w: 'w-[9px]', caret: true, sep: true },
    { label: 'Annotation monitor', w: 'w-[18px]', draw: <path d="M8 1v14M1 8h14" stroke="#dcdcdc" strokeWidth="1.800" />, sep: true },
    { label: 'Elevation cube', w: 'w-[18px]', draw: <><path d="M8 1l7 4v6l-7 4-7-4V5z" fill="#a8b09c" /><path d="M3 8l5 3 5-3-5-3z" fill="#5c9a4c" /></> },
    { label: 'Elevation', text: '3.500', w: 'w-[28px]', sep: true },
    { label: 'Units', w: 'w-[18px]', draw: <path d="M1 2h7v6H1zM9 5h6M8 8l-3 6h7l-3-6M12 5v6" stroke="#c4c4c4" strokeWidth="1.500" fill="none" />, sep: true },
    { label: 'Graphics performance', w: 'w-[18px]', draw: <><circle cx="8" cy="8" r="7.500" fill="#1f78e0" /><path d="M4 12L12 4" stroke="#0f3f86" strokeWidth="2" /></>, sep: true },
    { label: 'Isolate objects', w: 'w-[18px]', draw: <><path d="M1 2h8v7H1z" fill="#e8e8e8" /><circle cx="9" cy="8" r="4" fill="#e4c040" /><path d="M7 12h8M11 9v6" stroke="#3cae4a" strokeWidth="2.400" /><path d="M2 9l5 5" stroke="#3c84e0" strokeWidth="2.400" /></>, sep: true },
    { label: 'Clean screen', w: 'w-[17px]', draw: <><path d="M1 2h14v12H1z" stroke="#dcdcdc" strokeWidth="1.600" fill="none" /><path d="M9 5h3v3M7 11H4V8" stroke="#dcdcdc" strokeWidth="1.800" fill="none" /></> },
    { label: 'Customization', w: 'w-[16px]', draw: <path d="M1 3h14M1 8h14M1 13h14" stroke="#dcdcdc" strokeWidth="1.800" /> },
];

function StatusBar() {
    return (
        <footer className="flex h-5 shrink-0 items-start justify-between border-b border-[#8c8686] bg-[#363636] text-[8px]">
            <div className="flex pl-[6px] leading-[12px]">
                {['Model', 'Layout1', 'Layout2'].map((tab) => (
                    <button
                        key={tab}
                        className={`h-[13px] w-[42px] [clip-path:polygon(0_0,100%_0,calc(100%-5px)_100%,5px_100%)] ${tab === 'Model' ? 'bg-gradient-to-b from-[#6a6a6a] to-[#959595] font-bold text-white' : 'bg-[#565656] text-[#c4c4c4]'}`}
                    >
                        {tab}
                    </button>
                ))}
                <button aria-label="New layout" className="ml-[3px] flex h-[12px] w-4 items-center justify-center rounded-b-[3px] bg-[#505050]">
                    <svg viewBox="0 0 8 8" className="h-[6px] w-[6px]"><path d="M4 0v8M0 4h8" stroke="#dcdcdc" strokeWidth="1.600" /></svg>
                </button>
            </div>
            <div className="flex h-[18px] border-l border-[#777] bg-[#575757] text-[#f0f0f0]">
                {STATUS_ITEMS.map((item) => (
                    <button key={item.label} aria-label={item.label} className={`flex shrink-0 items-center justify-center whitespace-nowrap ${item.w} ${item.sep ? 'border-r border-[#777]' : ''}`}>
                        {item.text}
                        {item.caret && <Caret />}
                        {item.icon && <Icon name={item.icon} className="h-[9px] w-[9px]" />}
                        {item.draw && <svg viewBox="0 0 16 16" className="h-[11px] w-[11px]">{item.draw}</svg>}
                    </button>
                ))}
            </div>
        </footer>
    );
}

export default function App() {
    return (
        <div className="relative flex h-screen flex-col overflow-hidden bg-[#5b5b5b] font-['Roboto','Open_Sans',sans-serif]">
            <TitleBar />
            <MenuTabs />
            <Ribbon />
            <FileTabs />
            <div className="flex min-h-0 flex-1">
                <PropertiesPanel />
                <Canvas />
                <SideToolbar />
            </div>
            <StatusBar />
            {/* Application button */}
            <button aria-label="Application menu" className="absolute left-0 top-0 flex h-[27px] w-[27px] items-start rounded-br-[2px] border border-[#888] bg-gradient-to-b from-[#c8c8c8] to-[#6c6c6c]">
                <svg viewBox="0 0 48 52" className="h-full w-[22px]">
                    <path d="M6 36L18 4h9l12 32h-9l-3-9-9 2-3 7z" fill="#2583b8" />
                    <path d="M18 4h9l12 32h-9z" fill="#57b2dc" />
                    <path d="M6 36q14-12 26-8l-2-5q-10-1-17 4z" fill="#155f92" />
                    <text x="6" y="50" fontSize="13" fontWeight="bold" fill="#1c1c1c">C3D</text>
                </svg>
                <span className="mt-[10px]"><Caret className="border-t-[#111]" /></span>
            </button>
        </div>
    );
}
